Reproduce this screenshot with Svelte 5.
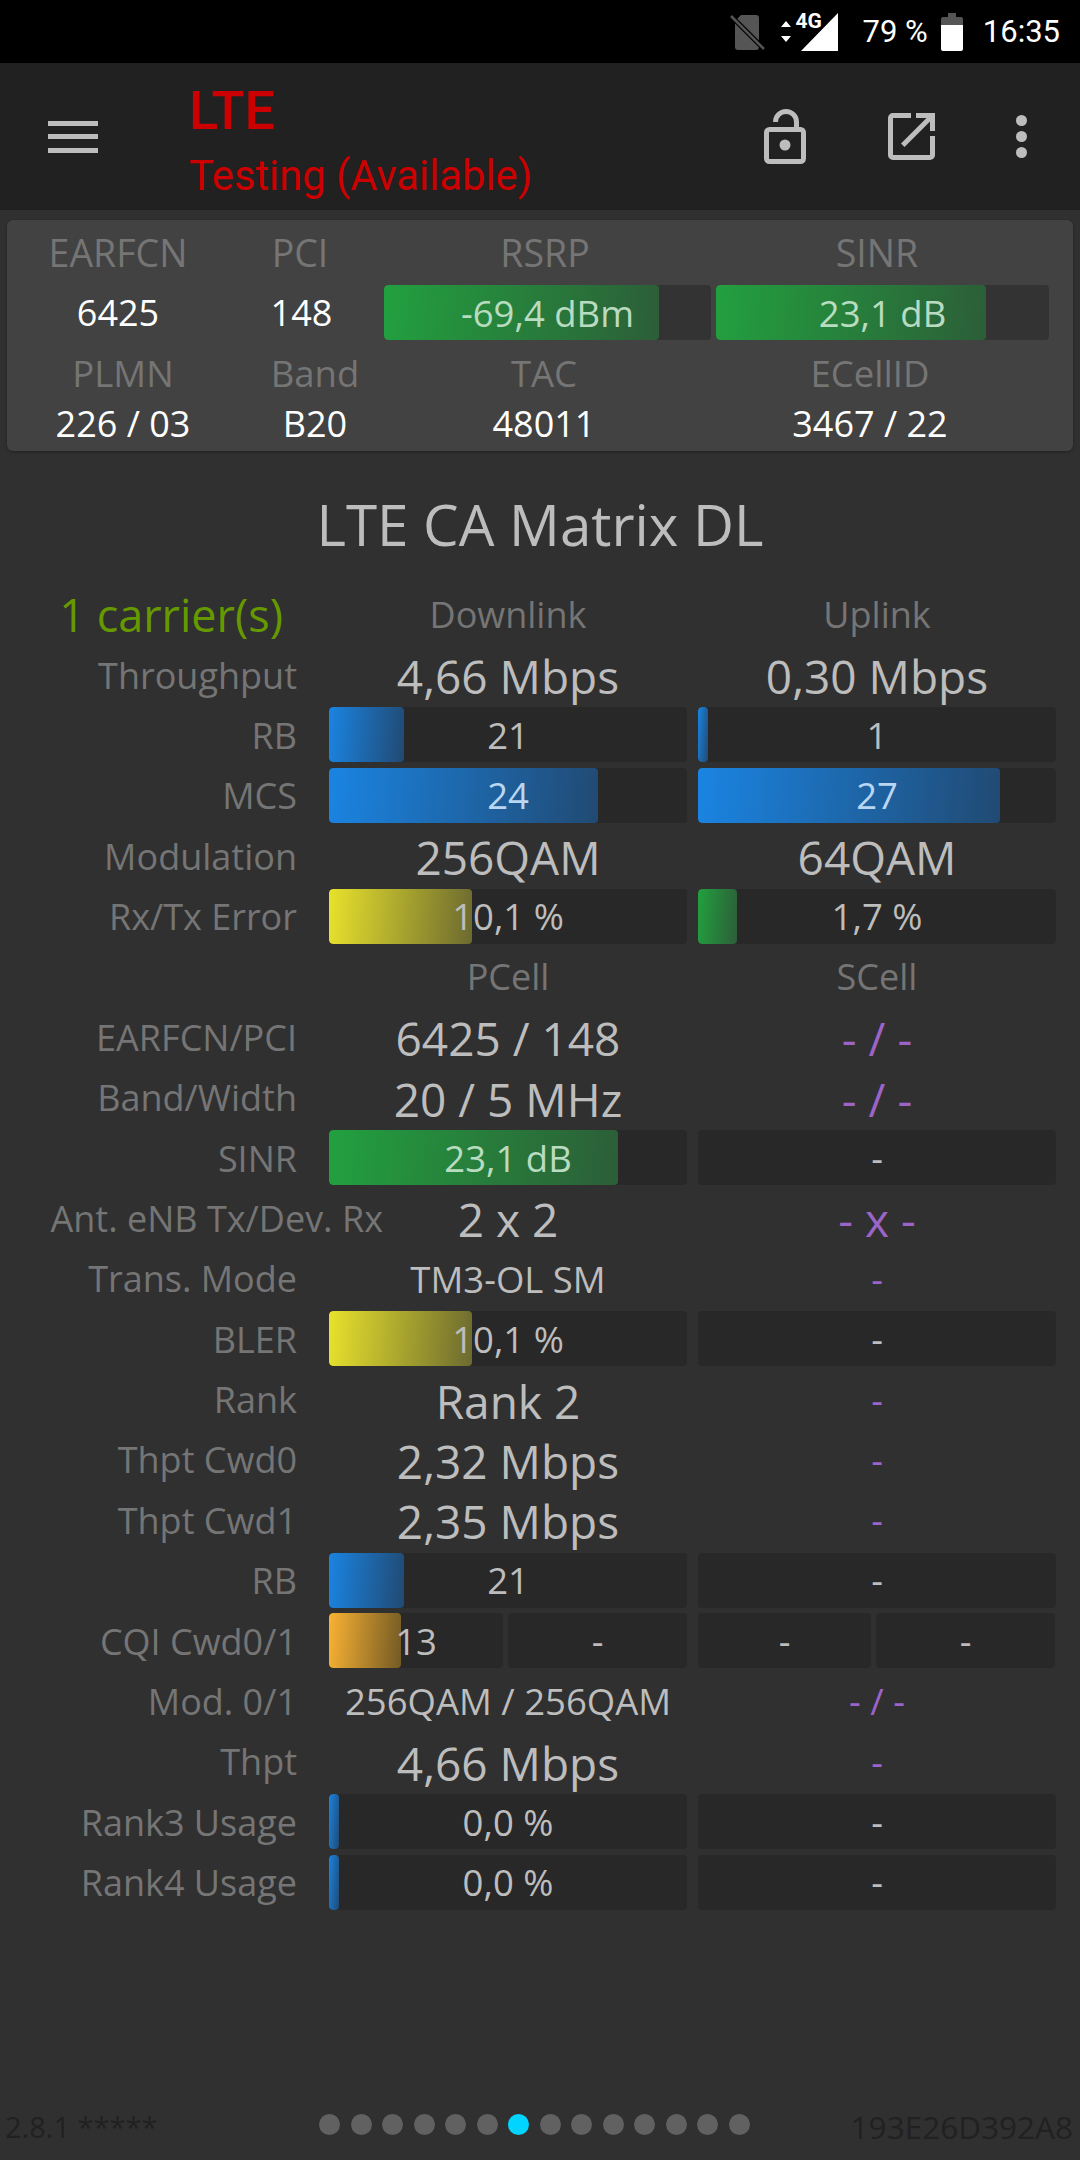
<script>
  const blue = 'blue', green = 'green', yellow = 'yellow', amber = 'amber';

  const big = (text) => ({ kind: 'big', text });
  const mid = (text) => ({ kind: 'mid', text });
  const head = (text) => ({ kind: 'head', text });
  const off = (text, size = 'big') => ({ kind: 'off ' + size, text });
  const bar = (text, pct = 0, color = blue, tint = false) => ({ kind: 'bar', text, pct, color, tint });

  const rows = [
    { label: 'Throughput', cells: [big('4,66 Mbps'), big('0,30 Mbps')] },
    { label: 'RB', cells: [bar('21', 21), bar('1', 2.8)] },
    { label: 'MCS', cells: [bar('24', 75, blue, true), bar('27', 84.4, blue, true)] },
    { label: 'Modulation', cells: [big('256QAM'), big('64QAM')] },
    { label: 'Rx/Tx Error', cells: [bar('10,1 %', 40, yellow), bar('1,7 %', 10.9, green)] },
    { label: '', cells: [head('PCell'), head('SCell')] },
    { label: 'EARFCN/PCI', cells: [big('6425 / 148'), off('- / -')] },
    { label: 'Band/Width', cells: [big('20 / 5 MHz'), off('- / -')] },
    { label: 'SINR', cells: [bar('23,1 dB', 80.7, green, true), bar('-')] },
    { label: 'Ant. eNB Tx/Dev. Rx', wide: true, cells: [big('2 x 2'), off('- x -')] },
    { label: 'Trans. Mode', cells: [mid('TM3-OL SM'), off('-', 'mid')] },
    { label: 'BLER', cells: [bar('10,1 %', 40, yellow), bar('-')] },
    { label: 'Rank', cells: [big('Rank 2'), off('-', 'mid')] },
    { label: 'Thpt Cwd0', cells: [big('2,32 Mbps'), off('-', 'mid')] },
    { label: 'Thpt Cwd1', cells: [big('2,35 Mbps'), off('-', 'mid')] },
    { label: 'RB', cells: [bar('21', 21), bar('-')] },
    { label: 'CQI Cwd0/1', split: true, cells: [bar('13', 41.4, amber), bar('-'), bar('-'), bar('-')] },
    { label: 'Mod. 0/1', cells: [mid('256QAM / 256QAM'), off('- / -', 'mid')] },
    { label: 'Thpt', cells: [big('4,66 Mbps'), off('-', 'mid')] },
    { label: 'Rank3 Usage', cells: [bar('0,0 %', 2.8), bar('-')] },
    { label: 'Rank4 Usage', cells: [bar('0,0 %', 2.8), bar('-')] }
  ];

  const dots = Array.from({ length: 14 }, (_, i) => i);
</script>

<div class="page">
  <div class="statusbar">
    <svg class="sim" viewBox="0 0 36 38" width="36" height="38">
      <path d="M11 2h15a3 3 0 0 1 3 3v29a3 3 0 0 1-3 3H8a3 3 0 0 1-3-3V8z" fill="#555" />
      <path d="M1 3l33 33" stroke="#000" stroke-width="5" />
      <path d="M1 3l33 33" stroke="#555" stroke-width="2.5" />
    </svg>
    <svg class="arrows" viewBox="0 0 12 22" width="12" height="22">
      <path d="M6 0l5 6H1zM6 21l5-6H1z" fill="#fff" />
    </svg>
    <span class="fourg">4G</span>
    <svg class="signal" viewBox="0 0 38 38" width="38" height="38">
      <path d="M37 0v38H0z" fill="#fff" />
    </svg>
    <span class="battery-text">79 %</span>
    <svg class="battery" viewBox="0 0 22 38" width="22" height="38">
      <path d="M7 0h8v4h5a2 2 0 0 1 2 2v6H0V6a2 2 0 0 1 2-2h5z" fill="#555" />
      <path d="M0 12h22v24a2 2 0 0 1-2 2H2a2 2 0 0 1-2-2z" fill="#fff" />
    </svg>
    <span class="clock">16:35</span>
  </div>

  <header class="toolbar">
    <div class="burger"><span></span><span></span><span></span></div>
    <div class="titles">
      <div class="tech">LTE</div>
      <div class="state">Testing (Available)</div>
    </div>
    <svg class="lock" viewBox="0 0 42 55" width="42" height="55">
      <path d="M11.500 13a10.500 10.500 0 0 1 21 0v7" fill="none" stroke="#bdbdbd" stroke-width="5" />
      <rect x="2.500" y="20.500" width="37" height="32" rx="3" fill="none" stroke="#bdbdbd" stroke-width="5" />
      <circle cx="21" cy="36" r="5.500" fill="#bdbdbd" />
    </svg>
    <svg class="share" viewBox="0 0 47 47" width="47" height="47">
      <path d="M23 2.500H5a2.500 2.500 0 0 0-2.500 2.500v37A2.500 2.500 0 0 0 5 44.500h37a2.500 2.500 0 0 0 2.500-2.500V23" fill="none" stroke="#bdbdbd" stroke-width="5" />
      <path d="M28 0h19v18h-5V8.500L16.500 34 13 30.500 38.500 5H28z" fill="#bdbdbd" />
    </svg>
    <div class="more"><span></span><span></span><span></span></div>
  </header>

  <section class="card">
    <div class="line heads one">
      <span>EARFCN</span><span>PCI</span><span>RSRP</span><span>SINR</span>
    </div>
    <div class="line vals one-vals">
      <span>6425</span>
      <span>148</span>
      <div class="bar card-bar">
        <div class="fill green" style="width: 84.1%"></div>
        <span class="bar-text tint-green">-69,4 dBm</span>
      </div>
      <div class="bar card-bar">
        <div class="fill green" style="width: 81.1%"></div>
        <span class="bar-text tint-green">23,1 dB</span>
      </div>
    </div>
    <div class="line heads two">
      <span>PLMN</span><span>Band</span><span>TAC</span><span>ECellID</span>
    </div>
    <div class="line vals two">
      <span>226 / 03</span><span>B20</span><span>48011</span><span>3467 / 22</span>
    </div>
  </section>

  <h1>LTE CA Matrix DL</h1>

  <main class="matrix">
    <div class="row">
      <div class="carriers">1 carrier(s)</div>
      <div class="pair"><span class="head">Downlink</span><span class="head">Uplink</span></div>
    </div>
    {#each rows as row}
      <div class="row">
        <div class="label" class:wide={row.wide}>{row.label}</div>
        <div class="pair" class:split={row.split}>
          {#each row.cells as cell}
            {#if cell.kind === 'bar'}
              <div class="bar">
                {#if cell.pct}
                  <div class="fill {cell.color}" style="width: {cell.pct}%"></div>
                {/if}
                <span class="bar-text" class:tint-blue={cell.tint && cell.color === 'blue'} class:tint-green={cell.tint && cell.color === 'green'}>{cell.text}</span>
              </div>
            {:else}
              <span class={cell.kind}>{cell.text}</span>
            {/if}
          {/each}
        </div>
      </div>
    {/each}
  </main>

  <footer class="footer">
    <span class="version">2.8.1 *****</span>
    <div class="dots">
      {#each dots as dot}
        <span class="dot" class:active={dot === 6}></span>
      {/each}
    </div>
    <span class="device">193E26D392A8</span>
  </footer>
</div>

<style>
  :global(body) {
    margin: 0;
    background: #303030;
  }

  .page {
    width: 1080px;
    height: 2160px;
    display: flex;
    flex-direction: column;
    background: #303030;
    font-family: "Open Sans", "Noto Sans", sans-serif;
    overflow: hidden;
  }

  .statusbar {
    height: 63px;
    background: #000;
    display: flex;
    align-items: center;
    padding-right: 20px;
    justify-content: flex-end;
    color: #fff;
    font-family: Roboto, sans-serif;
    box-sizing: border-box;
  }

  .sim { margin-right: 14px; }
  .arrows { margin-right: 7px; }
  .fourg {
    font-size: 21px;
    font-weight: 700;
    width: 0;
    position: relative;
    top: -11px;
    left: -3px;
  }
  .signal { margin-left: 2px; margin-right: 24px; }
  .battery-text { font-size: 31px; margin-right: 13px; }
  .battery { margin-right: 20px; }
  .clock { font-size: 31px; }

  .toolbar {
    height: 147px;
    background: #212121;
    display: flex;
    align-items: center;
    padding-left: 48px;
    font-family: Roboto, sans-serif;
    color: #cc0000;
  }

  .burger {
    width: 50px;
    height: 32px;
    display: flex;
    flex-direction: column;
    justify-content: space-between;
    margin-right: 91px;
  }

  .burger span {
    height: 5px;
    background: #bdbdbd;
  }

  .titles {
    width: 575px;
    display: flex;
    flex-direction: column;
    margin-top: 6px;
  }

  .tech {
    font-size: 54px;
    font-weight: 500;
    line-height: 72px;
  }

  .state {
    font-size: 41.7px;
    line-height: 58px;
  }

  .lock { margin-right: 82px; }
  .share { margin-right: 81px; }

  .more {
    display: flex;
    flex-direction: column;
    gap: 5px;
  }

  .more span {
    width: 11px;
    height: 11px;
    border-radius: 50%;
    background: #bdbdbd;
  }

  .card {
    margin: 10px 7px 0;
    height: 231px;
    background: #424242;
    border-radius: 6px;
    box-shadow: 0 1px 3px rgba(0, 0, 0, 0.35);
  }

  .line {
    display: grid;
    align-items: center;
    text-align: center;
  }

  .heads {
    color: #757575;
    font-size: 36.5px;
  }

  .vals {
    color: #fff;
    font-size: 36px;
  }

  .heads.one {
    height: 65px;
    font-size: 37.5px;
    grid-template-columns: 222px 142px 348px 316px;
  }

  .one-vals {
    height: 55px;
    grid-template-columns: 202px 165px 332px 333px;
    padding-left: 10px;
  }

  .heads.two {
    height: 66px;
    grid-template-columns: 232px 152px 306px 346px;
  }

  .vals.two {
    margin-top: -7px;
    grid-template-columns: 232px 152px 306px 346px;
  }

  .one-vals .card-bar:first-of-type {
    margin-right: 5px;
  }

  h1 {
    margin: 43px 0 0;
    height: 90px;
    font-size: 56.5px;
    line-height: 62px;
    font-weight: 400;
    text-align: center;
    color: #bdbdbd;
  }

  .matrix {
    display: grid;
    grid-auto-rows: 60.39px;
    padding-right: 24px;
  }

  .row {
    display: grid;
    grid-template-columns: 329px 1fr;
    align-items: center;
    min-width: 0;
  }

  .label {
    text-align: right;
    padding: 2px 32px 0 0;
    color: #757575;
    font-size: 36px;
    line-height: 44px;
    white-space: nowrap;
  }

  .label.wide {
    margin-right: -86px;
  }

  .carriers {
    color: #669900;
    font-size: 45px;
    line-height: 44px;
    text-align: right;
    padding: 1px 46px 0 0;
    white-space: nowrap;
  }

  .pair {
    display: grid;
    grid-template-columns: 358px 358px;
    column-gap: 11px;
    align-items: center;
    text-align: center;
    height: 100%;
  }

  .pair.split {
    grid-template-columns: 174px 179px 179px 179px;
    column-gap: 5px;
  }

  .pair.split .bar:nth-child(3) {
    margin-left: 6px;
  }

  .head {
    color: #757575;
    font-size: 36px;
    line-height: 44px;
    padding-top: 1px;
  }

  .big {
    color: #bdbdbd;
    font-size: 46px;
    line-height: 44px;
    padding-top: 3px;
  }

  .mid {
    color: #bdbdbd;
    font-size: 36.5px;
    line-height: 44px;
    padding-top: 1px;
  }

  .off {
    color: #9c64c8;
  }

  .bar {
    position: relative;
    height: 55px;
    background: #282828;
    border-radius: 4px;
    display: flex;
    align-items: center;
    justify-content: center;
    overflow: hidden;
  }

  .card-bar {
    background: #333;
  }

  .fill {
    position: absolute;
    left: 0;
    top: 0;
    bottom: 0;
    border-radius: 4px;
  }

  .fill.blue { background: linear-gradient(95deg, #1a84e2, #214a73); }
  .fill.green { background: linear-gradient(95deg, #22a03f, #2c5e38); }
  .fill.yellow { background: linear-gradient(95deg, #e8e22c, #6c6a30); }
  .fill.amber { background: linear-gradient(95deg, #f9b233, #735a24); }

  .bar-text {
    position: relative;
    color: #bdbdbd;
    font-size: 36.5px;
  }

  .bar-text.tint-blue { color: #b9d7f1; }
  .bar-text.tint-green { color: #b9dcc0; }

  .footer {
    margin-top: auto;
    height: 72px;
    padding: 0 7px 0 5px;
    display: flex;
    align-items: center;
    justify-content: space-between;
    color: #212121;
    position: relative;
  }

  .version {
    font-size: 29px;
    padding-top: 5px;
  }

  .device {
    font-size: 31.5px;
    padding-top: 5px;
  }

  .dots {
    position: absolute;
    left: 319px;
    display: flex;
    gap: 10.5px;
  }

  .dot {
    width: 21px;
    height: 21px;
    border-radius: 50%;
    background: #616161;
  }

  .dot.active {
    background: #00d4ff;
  }
</style>
